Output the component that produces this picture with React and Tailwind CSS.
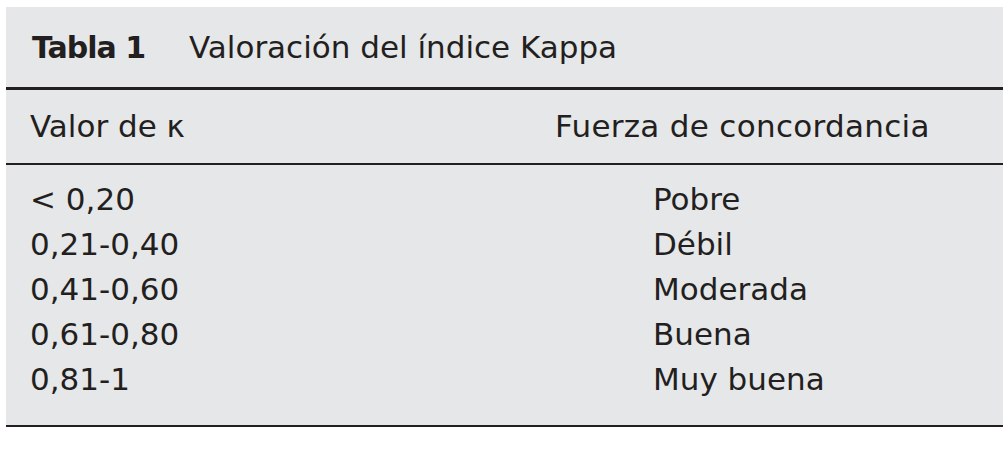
import React from "react";

const rows = [
  ["< 0,20", "Pobre"],
  ["0,21-0,40", "Débil"],
  ["0,41-0,60", "Moderada"],
  ["0,61-0,80", "Buena"],
  ["0,81-1", "Muy buena"],
];

const App = () => {
  return (
    <div className="w-[1008px] h-[454px] bg-white pt-[7px] pl-[6px] font-['DejaVu_Sans',sans-serif] text-[#231f20]">
      <div className="w-[997px] bg-[#e6e7e9]">
        {/* Title */}
        <div className="h-[80px] flex items-center pl-[26px] text-[31px]">
          <span className="w-[157px] font-bold text-[30px] tracking-[-1px]">Tabla 1</span>
          <span>Valoración del índice Kappa</span>
        </div>
        <div className="h-[3px] bg-[#231f20]"></div>

        {/* Header */}
        <div className="h-[73px] grid grid-cols-[549px_1fr] items-center text-[31px]">
          <div className="pl-[24px]">Valor de κ</div>
          <div className="tracking-[0.3px]">Fuerza de concordancia</div>
        </div>
        <div className="h-[2px] bg-[#231f20]"></div>

        {/* Body */}
        <div className="pt-[12px] pb-[23px] text-[31px] leading-[45px]">
          {rows.map(([valor, fuerza]) => (
            <div key={valor} className="grid grid-cols-[549px_1fr]">
              <div className="pl-[24px]">{valor}</div>
              <div className="pl-[98px]">{fuerza}</div>
            </div>
          ))}
        </div>
        <div className="h-[2px] bg-[#231f20]"></div>
      </div>
    </div>
  );
};

export default App;
